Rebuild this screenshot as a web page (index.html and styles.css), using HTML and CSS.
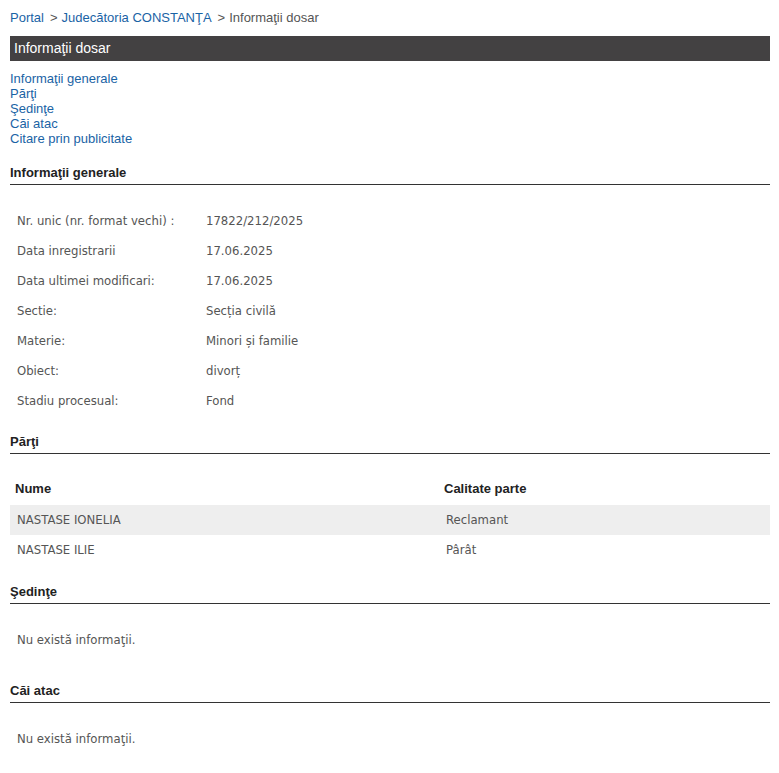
FILE: index.html
```html
<!DOCTYPE html>
<html lang="ro">
<head>
<meta charset="utf-8">
<title>Informaţii dosar</title>
<link rel="stylesheet" href="styles.css">
</head>
<body>
<div class="page">
  <nav class="crumbs">
    <a href="#">Portal</a><span class="sep">&gt;</span><a href="#">Judecătoria CONSTANŢA</a><span class="sep">&gt;</span><span class="current">Informaţii dosar</span>
  </nav>
  <div class="bar">Informaţii dosar</div>
  <ul class="toc">
    <li><a href="#gen">Informaţii generale</a></li>
    <li><a href="#parti">Părţi</a></li>
    <li><a href="#sedinte">Şedinţe</a></li>
    <li><a href="#cai">Căi atac</a></li>
    <li><a href="#citare">Citare prin publicitate</a></li>
  </ul>

  <h2 class="sect first" id="gen">Informaţii generale</h2>
  <table class="info">
    <tr><td class="lbl">Nr. unic (nr. format vechi) :</td><td>17822/212/2025</td></tr>
    <tr><td class="lbl">Data inregistrarii</td><td>17.06.2025</td></tr>
    <tr><td class="lbl">Data ultimei modificari:</td><td>17.06.2025</td></tr>
    <tr><td class="lbl">Sectie:</td><td>Secția civilă</td></tr>
    <tr><td class="lbl">Materie:</td><td>Minori și familie</td></tr>
    <tr><td class="lbl">Obiect:</td><td>divorț</td></tr>
    <tr><td class="lbl">Stadiu procesual:</td><td>Fond</td></tr>
  </table>

  <h2 class="sect s-parti" id="parti">Părţi</h2>
  <table class="parti">
    <thead>
      <tr><th class="c1">Nume</th><th>Calitate parte</th></tr>
    </thead>
    <tbody>
      <tr class="odd"><td>NASTASE IONELIA</td><td>Reclamant</td></tr>
      <tr><td>NASTASE ILIE</td><td>Pârât</td></tr>
    </tbody>
  </table>

  <h2 class="sect s-sed" id="sedinte">Şedinţe</h2>
  <p class="empty">Nu există informaţii.</p>

  <h2 class="sect s-cai" id="cai">Căi atac</h2>
  <p class="empty">Nu există informaţii.</p>
</div>
</body>
</html>
```

FILE: styles.css
```css
html, body {
  margin: 0;
  padding: 0;
  background: #fff;
}
.page {
  width: 760px;
  margin-left: 10px;
  font-family: "Liberation Sans", Arial, sans-serif;
  font-size: 13px;
  color: #333;
}
a {
  color: #1a63a5;
  text-decoration: none;
}
.crumbs {
  padding-top: 10px;
  height: 16px;
  line-height: 16px;
  font-size: 13px;
}
.crumbs .sep {
  color: #555;
  margin: 0 4px 0 6px;
}
.crumbs .current {
  color: #555;
}
.bar {
  margin-top: 10px;
  height: 25px;
  line-height: 24px;
  background: #434142;
  color: #fff;
  font-size: 14px;
  padding-left: 4px;
}
.toc {
  list-style: none;
  margin: 10px 0 0;
  padding: 0;
  line-height: 15px;
}
.sect {
  margin: 0;
  font-size: 13px;
  font-weight: bold;
  color: #222;
  line-height: 16px;
  padding-top: 1px;
  padding-bottom: 3px;
  border-bottom: 1px solid #333;
}
.sect.first { margin-top: 18px; }
.sect.s-parti { margin-top: 17px; }
.sect.s-sed { margin-top: 18px; }
.sect.s-cai { margin-top: 27px; }

.info, .parti {
  width: 760px;
  border-collapse: collapse;
  font-family: "DejaVu Sans", Tahoma, sans-serif;
  font-size: 11.7px;
  color: #555;
}
.info {
  margin-top: 21px;
}
.info td {
  height: 30px;
  padding: 0;
  vertical-align: middle;
}
.info td.lbl {
  width: 189px;
  padding-left: 7px;
}
.parti {
  margin-top: 19px;
}
.parti th {
  font-family: "Liberation Sans", Arial, sans-serif;
  font-size: 13px;
  font-weight: bold;
  color: #222;
  text-align: left;
  height: 31px;
  padding: 0 0 1px 5px;
  vertical-align: middle;
}
.parti th.c1 { width: 424px; }
.parti td {
  height: 30px;
  padding: 0 0 0 7px;
  vertical-align: middle;
}
.parti tr.odd td {
  background: #eeeeee;
}
.empty {
  margin: 21px 0 0;
  height: 30px;
  line-height: 30px;
  padding-left: 7px;
  font-family: "DejaVu Sans", Tahoma, sans-serif;
  font-size: 11.7px;
  color: #555;
}
```
